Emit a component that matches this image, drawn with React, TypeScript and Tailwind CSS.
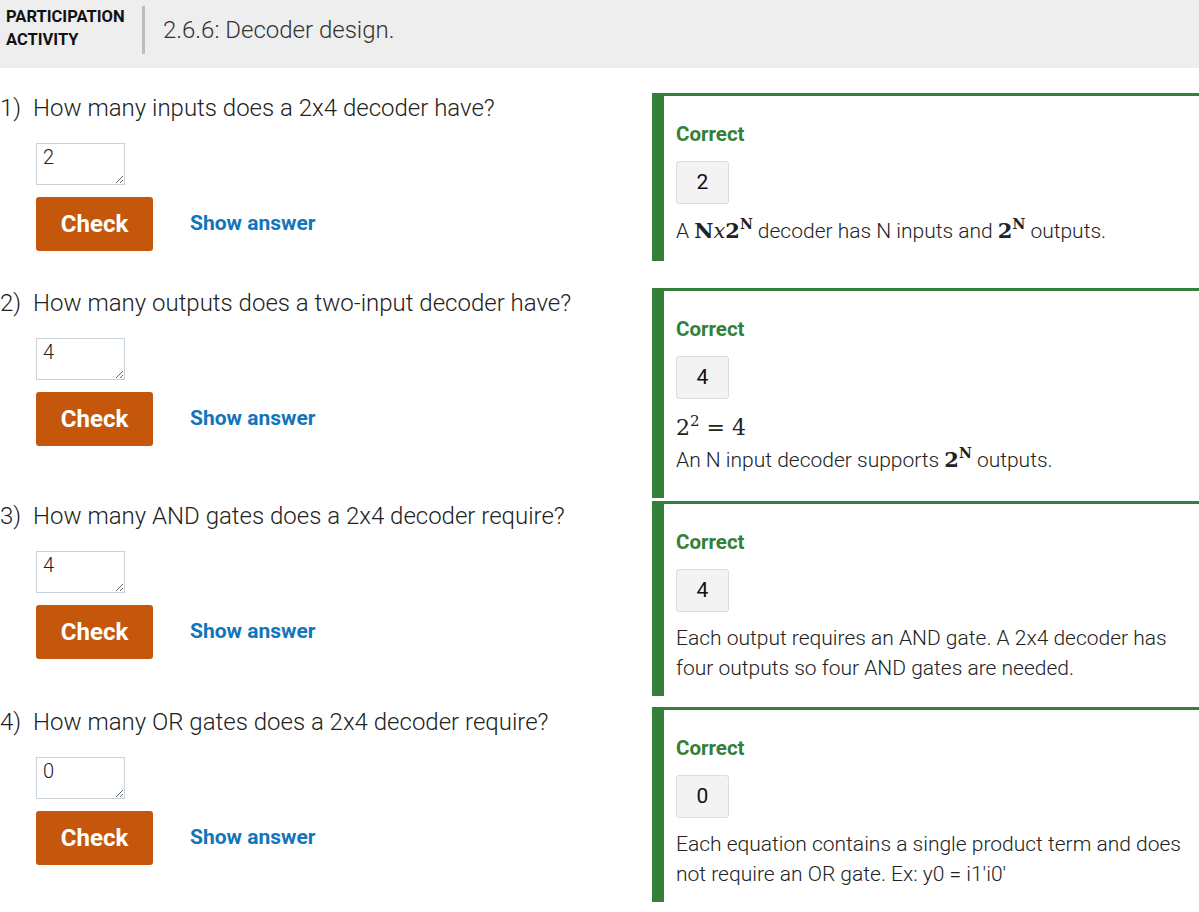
import type { ReactNode } from "react";

interface Item {
  num: string;
  question: string;
  value: string;
  answer: string;
  explain: ReactNode;
  rowClass: string;
  explainClass: string;
}

const SERIF = "font-['DejaVu_Serif','Liberation_Serif',serif]";

function Bold2N() {
  return (
    <span className={`${SERIF} font-bold text-[21px]`}>
      2<sup className="text-[14px] -top-[9px]">N</sup>
    </span>
  );
}

const ITEMS: Item[] = [
  {
    num: "1)",
    question: "How many inputs does a 2x4 decoder have?",
    value: "2",
    answer: "2",
    rowClass: "mb-[27px]",
    explainClass: "mt-[12px]",
    explain: (
      <p>
        A{" "}
        <span className={`${SERIF} text-[21px]`}>
          <span className="font-bold">N</span>
          <i>x</i>
          <span className="font-bold">
            2<sup className="text-[14px] -top-[9px]">N</sup>
          </span>
        </span>{" "}
        decoder has N inputs and <Bold2N /> outputs.
      </p>
    ),
  },
  {
    num: "2)",
    question: "How many outputs does a two-input decoder have?",
    value: "4",
    answer: "4",
    rowClass: "mb-[3px]",
    explainClass: "mt-[12px]",
    explain: (
      <>
        <p className={`${SERIF} text-[22px] leading-[34px]`}>
          2<sup className="text-[15px] -top-[9px]">2</sup> = 4
        </p>
        <p className="mb-[8px]">
          An N input decoder supports <Bold2N /> outputs.
        </p>
      </>
    ),
  },
  {
    num: "3)",
    question: "How many AND gates does a 2x4 decoder require?",
    value: "4",
    answer: "4",
    rowClass: "mb-[11px]",
    explainClass: "mt-[11px] -mb-[2px]",
    explain: (
      <p>
        Each output requires an AND gate. A 2x4 decoder has four outputs so four AND gates are needed.
      </p>
    ),
  },
  {
    num: "4)",
    question: "How many OR gates does a 2x4 decoder require?",
    value: "0",
    answer: "0",
    rowClass: "mb-0",
    explainClass: "mt-[11px] -mb-[2px]",
    explain: (
      <p>
        Each equation contains a single product term and does not require an OR gate. Ex: y0 = i1'i0'
      </p>
    ),
  },
];

function QuestionRow({ item }: { item: Item }) {
  return (
    <div className={`flex items-start ${item.rowClass}`}>
      <div className="w-[652px] shrink-0">
        <div className="flex text-[24px] leading-[30px] font-light text-[#222]">
          <span className="w-[33px] shrink-0">{item.num}</span>
          <span>{item.question}</span>
        </div>
        <div className="pl-[36px]">
          <textarea
            readOnly
            defaultValue={item.value}
            className="mt-[20px] block w-[89px] h-[42px] border border-[#c9d1d9] px-[6px] pt-px text-[20px] leading-[24px] font-light text-[#222] bg-white outline-none"
          />
          <div className="mt-[12px] flex items-center">
            <button className="w-[117px] h-[54px] rounded-[3px] bg-[#c4570b] text-white font-bold text-[24px]">
              Check
            </button>
            <button className="ml-[37px] text-[#1275b9] font-bold text-[21px]">Show answer</button>
          </div>
        </div>
      </div>
      <div className="flex-1 border-l-[12px] border-t-[3px] border-[#367f38] pl-[12px] pr-[12px] pt-[25px] pb-[15px]">
        <div className="text-[20.5px] leading-[26px] font-bold text-[#367f38]">Correct</div>
        <div className="mt-[14px] w-[53px] h-[43px] flex items-center justify-center bg-[#f3f3f3] border border-[#dcdcdc] rounded-[3px] text-[21px] text-[#111]">
          {item.answer}
        </div>
        <div className={`text-[21px] leading-[30px] font-light text-[#222] ${item.explainClass}`}>
          {item.explain}
        </div>
      </div>
    </div>
  );
}

export default function App() {
  return (
    <div className="w-[1199px] min-h-[912px] bg-white font-['Roboto','Liberation_Sans',sans-serif] overflow-hidden">
      <div className="h-[68px] bg-[#eeeeee] flex items-start">
        <div className="pl-[6px] pt-[5px] w-[142px] text-[16.5px] leading-[23px] font-bold text-[#111]">
          PARTICIPATION
          <br />
          ACTIVITY
        </div>
        <div className="mt-[6px] w-[3px] h-[48px] bg-[#bdbdbd]" />
        <div className="ml-[18px] mt-[15px] text-[24px] leading-[30px] font-light text-[#333]">
          2.6.6: Decoder design.
        </div>
      </div>
      <div className="pt-[25px]">
        {ITEMS.map((item) => (
          <QuestionRow key={item.num} item={item} />
        ))}
      </div>
    </div>
  );
}
